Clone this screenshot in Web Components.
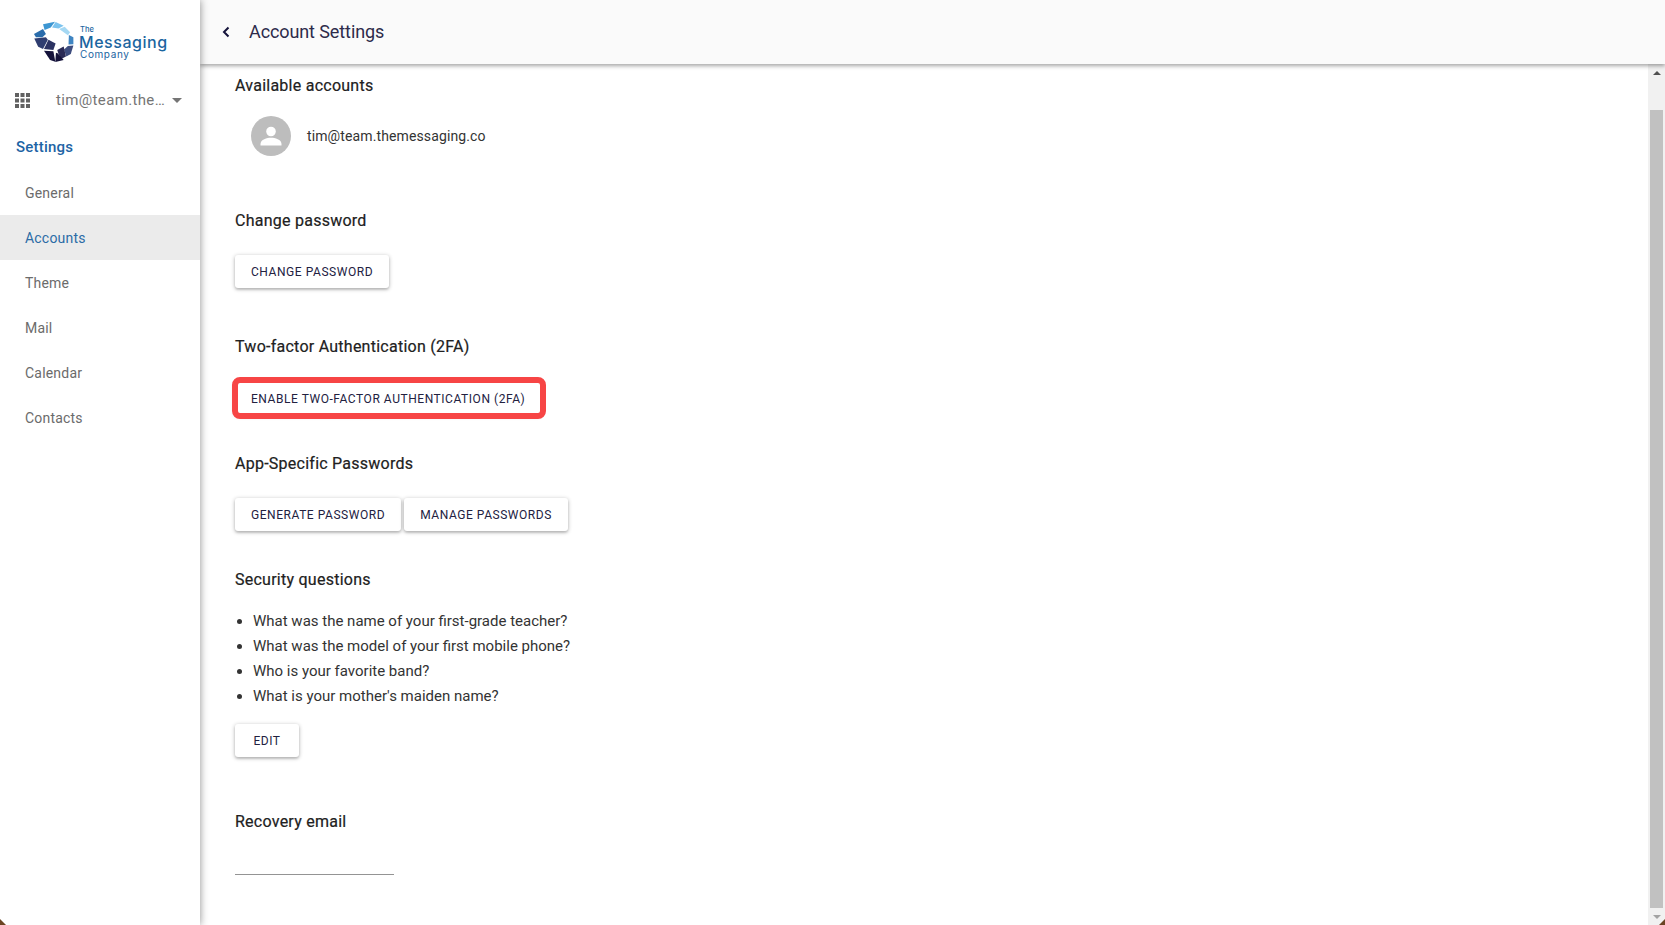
<!DOCTYPE html>
<html>
<head>
<meta charset="utf-8">
<title>Account Settings</title>
<style>
html, body { margin: 0; height: 100%; overflow: hidden; background: #fff; }
body { font-family: Roboto, "Liberation Sans", sans-serif; }
</style>
</head>
<body>
<app-shell>
  <side-nav slot="nav">
    <nav-item>General</nav-item>
    <nav-item active>Accounts</nav-item>
    <nav-item>Theme</nav-item>
    <nav-item>Mail</nav-item>
    <nav-item>Calendar</nav-item>
    <nav-item>Contacts</nav-item>
  </side-nav>
  <top-bar slot="top">Account Settings</top-bar>

  <settings-section heading="Available accounts" style="margin-top:10px" gap="18">
    <account-row>tim@team.themessaging.co</account-row>
  </settings-section>
  <settings-section heading="Change password" style="margin-top:53px" gap="22">
    <raised-button>Change password</raised-button>
  </settings-section>
  <settings-section heading="Two-factor Authentication (2FA)" style="margin-top:47px" gap="23">
    <raised-button marked>Enable two-factor authentication (2FA)</raised-button>
  </settings-section>
  <settings-section heading="App-Specific Passwords" style="margin-top:37px" gap="22">
    <raised-button>Generate password</raised-button>
    <raised-button>Manage passwords</raised-button>
  </settings-section>
  <settings-section heading="Security questions" style="margin-top:37px" gap="17">
    <question-list>
      <li>What was the name of your first-grade teacher?</li>
      <li>What was the model of your first mobile phone?</li>
      <li>Who is your favorite band?</li>
      <li>What is your mother's maiden name?</li>
    </question-list>
    <raised-button slot="after">Edit</raised-button>
  </settings-section>
  <settings-section heading="Recovery email" style="margin-top:53px" gap="21">
    <line-input></line-input>
  </settings-section>
</app-shell>

<script>
(function() {
  function define(name, markup) {
    customElements.define(name, class extends HTMLElement {
      constructor() {
        super();
        this.attachShadow({mode: 'open'}).innerHTML = markup;
      }
    });
  }

  define('app-shell', `
<style>
:host { display: flex; width: 1665px; height: 925px; position: relative; overflow: hidden; }
#nav { flex: 0 0 200px; position: relative; z-index: 3; background: #fff; box-shadow: 0 0 8px rgba(0,0,0,0.45); }
#right { flex: 1; min-width: 0; display: flex; flex-direction: column; }
#body { flex: 1; min-height: 0; display: flex; }
#content { flex: 1; min-width: 0; padding-left: 35px; }
.corner { position: absolute; bottom: 0; width: 6px; height: 6px; z-index: 5; background: #6b4423; }
#cl { left: 0; clip-path: polygon(0 0, 100% 100%, 0 100%); }
#cr { right: 0; clip-path: polygon(100% 0, 100% 100%, 0 100%); }
</style>
<div id="nav"><slot name="nav"></slot></div>
<div id="right">
  <slot name="top"></slot>
  <div id="body">
    <div id="content"><slot></slot></div>
    <fake-scrollbar></fake-scrollbar>
  </div>
</div>
<div class="corner" id="cl"></div>
<div class="corner" id="cr"></div>
`);

  define('brand-logo', `
<style>
:host { display: flex; align-items: center; height: 84px; padding-left: 33px; box-sizing: border-box; }
svg { width: 42px; height: 42px; flex: none; }
#words { margin-left: 4px; display: flex; flex-direction: column; font-family: Inter, "Open Sans", sans-serif; color: #1b659f; }
#the { font-size: 7.5px; line-height: 8px; font-weight: 500; margin-left: 1px; }
#big { font-size: 16px; line-height: 16px; font-weight: 500; letter-spacing: 0.55px; }
#small { font-size: 10px; line-height: 8px; margin-left: 1px; letter-spacing: 0.6px; }
</style>
<svg viewBox="99 60 126 130">
  <polygon fill="#3d96d2" points="128,70 165,62 152,80 133,88"/>
  <polygon fill="#7cc3ee" points="167,63 192,75 176,83 156,80"/>
  <polygon fill="#a5d8f3" points="195,78 212,95 205,104 178,85"/>
  <polygon fill="#3f85c2" points="208,103 222,110 222,132 207,133"/>
  <polygon fill="#2a6cab" points="100,100 128,85 137,100 126,110 106,110"/>
  <polygon fill="#2f3d70" points="101,114 137,110 143,118 128,147 113,140"/>
  <polygon fill="#2b3262" points="145,118 167,130 160,150 131,147"/>
  <polygon fill="#3d4c7e" points="205,137 222,136 214,162 200,170 193,148"/>
  <polygon fill="#2a2a55" points="172,150 192,139 199,170 184,178 177,165"/>
  <polygon fill="#14123a" points="131,152 160,154 166,186 150,181"/>
  <polygon fill="#14123a" points="168,158 173,160 192,181 166,187"/>
</svg>
<div id="words"><span id="the">The</span><span id="big">Messaging</span><span id="small">Company</span></div>
`);

  define('side-nav', `
<style>
:host { display: block; }
#account { display: flex; align-items: center; height: 32px; color: #757575; font-size: 15px; letter-spacing: 0.35px; }
#grid { margin-left: 15px; width: 15px; height: 15px; flex: none; }
#name { margin-left: 26px; width: 110px; white-space: nowrap; }
#caret { margin-left: 6px; width: 0; height: 0; border: 5px solid transparent; border-top-color: #757575; border-bottom: 0; }
#title { margin: 19px 0 0 16px; height: 25px; line-height: 25px; font-size: 15px; font-weight: 500; color: #1d64a5; letter-spacing: 0.2px; }
#items { margin-top: 10px; }
</style>
<brand-logo></brand-logo>
<div id="account">
  <svg id="grid" viewBox="0 0 15 15" fill="#616161">
    <rect x="0" y="0" width="4" height="4"/><rect x="5.5" y="0" width="4" height="4"/><rect x="11" y="0" width="4" height="4"/>
    <rect x="0" y="5.5" width="4" height="4"/><rect x="5.5" y="5.5" width="4" height="4"/><rect x="11" y="5.5" width="4" height="4"/>
    <rect x="0" y="11" width="4" height="4"/><rect x="5.5" y="11" width="4" height="4"/><rect x="11" y="11" width="4" height="4"/>
  </svg>
  <span id="name">tim@team.the…</span>
  <span id="caret"></span>
</div>
<div id="title">Settings</div>
<div id="items"><slot></slot></div>
`);

  define('nav-item', `
<style>
:host { display: flex; align-items: center; height: 45px; padding-left: 25px; font-size: 14px; color: #6b6b6b; letter-spacing: 0.2px; }
:host([active]) { background: #ebebeb; color: #2c6ca6; }
</style>
<slot></slot>
`);

  define('top-bar', `
<style>
:host { display: flex; align-items: center; height: 64px; background: #fafafa; position: relative; z-index: 2; box-shadow: 0 2px 4px rgba(0,0,0,0.35); color: #2d2b4a; font-size: 18px; letter-spacing: -0.1px; }
svg { width: 12px; height: 12px; margin-left: 20px; margin-right: 17px; flex: none; }
#label { padding-bottom: 2px; }
</style>
<svg viewBox="0 0 12 12" fill="none" stroke="#14123a" stroke-width="2"><path d="M8.5 1.5 L4 6 L8.5 10.5"/></svg>
<span id="label"><slot></slot></span>
`);

  customElements.define('settings-section', class extends HTMLElement {
    constructor() {
      super();
      this.attachShadow({mode: 'open'}).innerHTML = `
<style>
:host { display: block; }
h3 { margin: 0; font-size: 16px; line-height: 24px; font-weight: 400; color: #212121; letter-spacing: 0.25px; -webkit-text-stroke: 0.2px #212121; }
#row { display: flex; flex-wrap: wrap; gap: 3px; }
#after { display: flex; }
::slotted([slot=after]) { margin-top: 15px; }
</style>
<h3></h3>
<div id="row"><slot></slot></div>
<div id="after"><slot name="after"></slot></div>
`;
    }
    connectedCallback() {
      this.shadowRoot.querySelector('h3').textContent = this.getAttribute('heading');
      this.shadowRoot.querySelector('#row').style.marginTop = this.getAttribute('gap') + 'px';
    }
  });

  define('raised-button', `
<style>
:host { display: inline-flex; align-items: center; justify-content: center; box-sizing: border-box; min-width: 64px; height: 33px; padding: 0 16px; background: #fff; border-radius: 3px; position: relative; box-shadow: 0 1px 4px rgba(0,0,0,0.3), 0 2px 2px rgba(0,0,0,0.1); color: #22213f; font-size: 12px; font-weight: 400; letter-spacing: 0.55px; text-transform: uppercase; white-space: nowrap; }
#mark { display: none; position: absolute; left: -3px; right: -5px; top: -5px; bottom: -4px; border: 6px solid #f74545; border-radius: 8px; pointer-events: none; }
:host([marked]) #mark { display: block; }
</style>
<slot></slot>
<div id="mark"></div>
`);

  define('account-row', `
<style>
:host { display: flex; align-items: center; height: 40px; padding-left: 16px; font-size: 14px; color: #333; letter-spacing: 0.12px; }
svg { width: 40px; height: 40px; flex: none; margin-right: 16px; }
</style>
<svg viewBox="0 0 40 40">
  <circle cx="20" cy="20" r="20" fill="#bdbdbd"/>
  <circle cx="20" cy="15.5" r="4.8" fill="#fff"/>
  <path fill="#fff" d="M9.5 28 C9.5 23.5 16 21.8 20 21.8 C24 21.8 30.5 23.5 30.5 28 L30.5 29.5 L9.5 29.5 Z"/>
</svg>
<slot></slot>
`);

  define('question-list', `
<style>
:host { display: block; padding-left: 18px; font-size: 15px; line-height: 25px; color: #333; }
::slotted(li) { display: list-item; list-style: disc; }
</style>
<slot></slot>
`);

  define('line-input', `
<style>
:host { display: block; width: 159px; height: 19px; border-bottom: 1px solid #949494; }
</style>
`);

  define('fake-scrollbar', `
<style>
:host { display: flex; flex-direction: column; align-items: center; flex: 0 0 17px; background: #f1f1f1; }
.arrow { flex: none; height: 17px; display: flex; align-items: center; justify-content: center; }
#up { border: 4px solid transparent; border-bottom-color: #505050; border-top: 0; width: 0; height: 0; }
#down { border: 4px solid transparent; border-top-color: #a3a3a3; border-bottom: 0; width: 0; height: 0; }
#track { flex: 1; width: 100%; display: flex; justify-content: center; padding-top: 29px; box-sizing: border-box; }
#thumb { width: 13px; height: 100%; background: #c1c1c1; }
</style>
<div class="arrow"><span id="up"></span></div>
<div id="track"><div id="thumb"></div></div>
<div class="arrow"><span id="down"></span></div>
`);
})();
</script>
</body>
</html>
